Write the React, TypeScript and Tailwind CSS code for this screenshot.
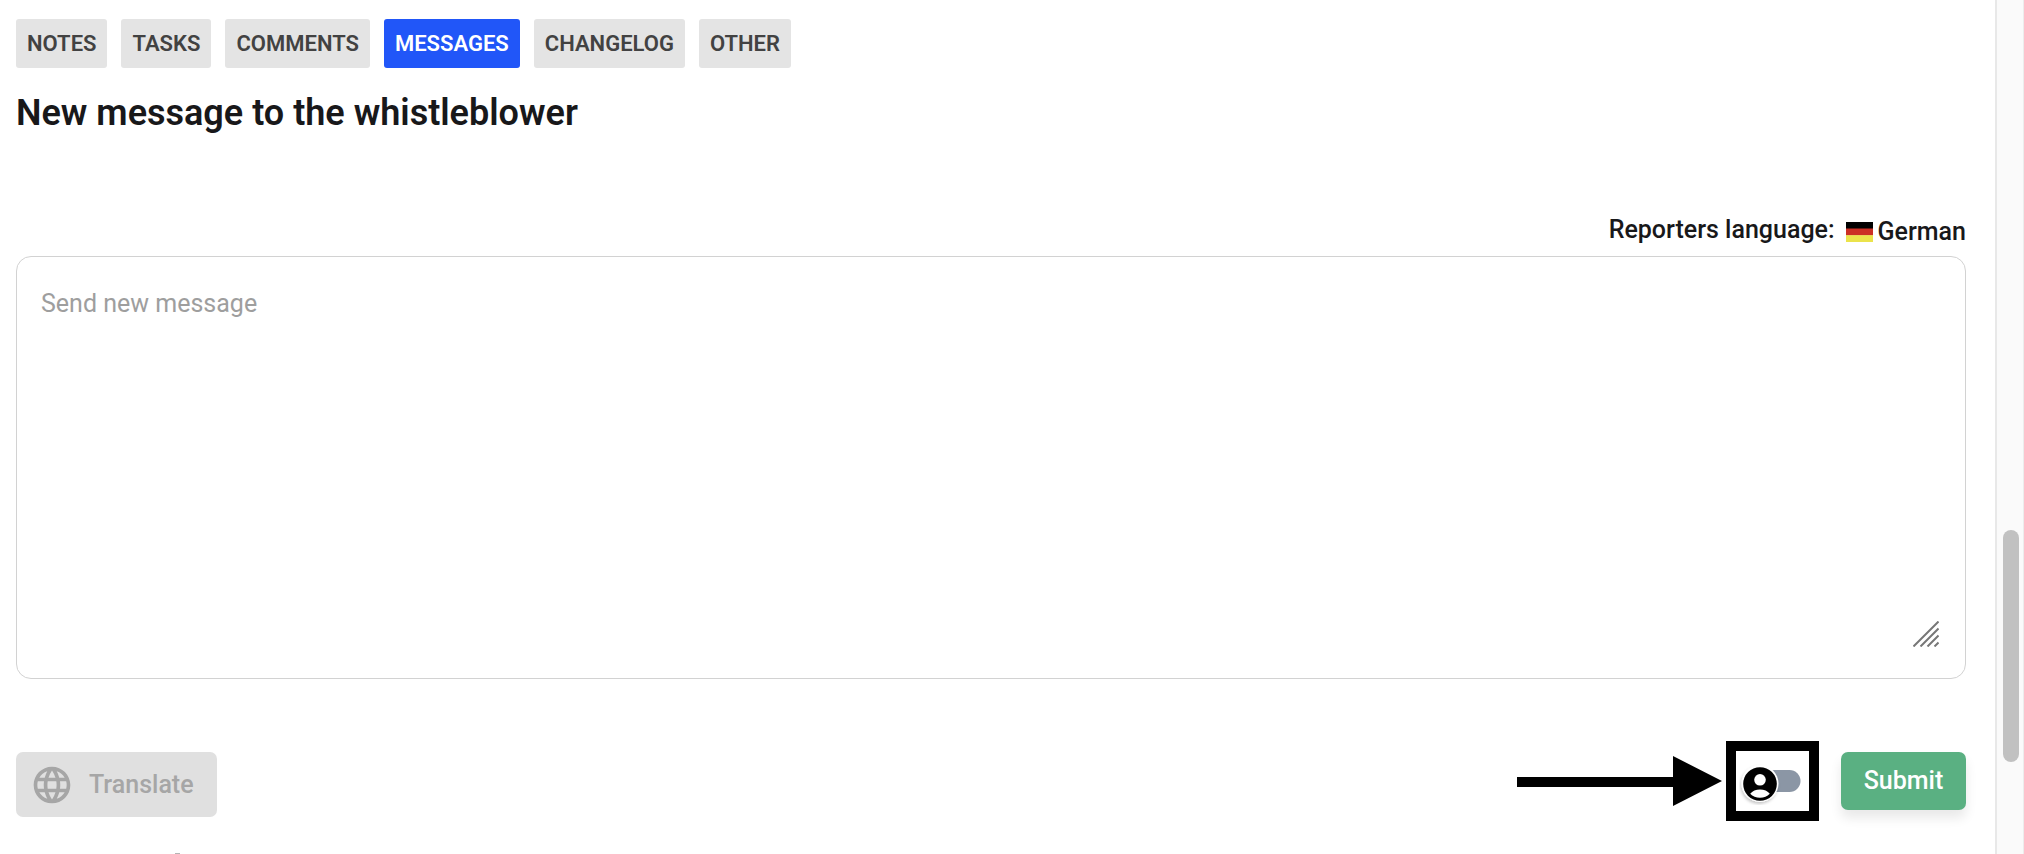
import { useState } from "react";
import { MdLanguage } from "react-icons/md";

const tabs = ["Notes", "Tasks", "Comments", "Messages", "Changelog", "Other"];

function Tabs() {
  const [active, setActive] = useState("Messages");
  return (
    <nav className="flex flex-wrap gap-[14px]">
      {tabs.map((tab) => (
        <button
          key={tab}
          type="button"
          onClick={() => setActive(tab)}
          className={
            tab === active
              ? "h-[49px] rounded-[3px] bg-[#2156f8] px-[11px] text-[22px] font-semibold uppercase text-white"
              : "h-[49px] rounded-[3px] bg-[#e4e4e4] px-[11px] text-[22px] font-semibold uppercase text-[#424242]"
          }
        >
          {tab}
        </button>
      ))}
    </nav>
  );
}

function GermanFlag() {
  return (
    <svg width="27" height="20" viewBox="0 0 27 20" aria-hidden="true">
      <rect width="27" height="7" fill="#000" />
      <rect y="6.5" width="27" height="7" fill="#cc2f25" />
      <rect y="13.2" width="27" height="6.8" fill="#ebe34b" />
    </svg>
  );
}

function ResizeGrip() {
  return (
    <svg
      className="pointer-events-none absolute right-[27px] bottom-[32px]"
      width="26"
      height="26"
      viewBox="0 0 26 26"
      stroke="#777"
      strokeWidth="2"
      aria-hidden="true"
    >
      <path d="M0.5 25.5L25.5 0.5M7.5 25.5L25.5 7.5M14.5 25.5L25.5 14.5M21.5 25.5L25.5 21.5" />
    </svg>
  );
}

function Arrow() {
  return (
    <svg width="205" height="50" viewBox="0 0 205 50" aria-hidden="true">
      <path d="M0 21H156V0L205 25L156 50V31H0Z" fill="#000" />
    </svg>
  );
}

function IdentitySwitch() {
  const [on, setOn] = useState(false);
  return (
    <div className="flex h-20 w-[93px] items-center justify-center border-10 border-black">
      <button type="button" role="switch" aria-checked={on} aria-label="Show identity" onClick={() => setOn(!on)}>
        <svg width="68" height="48" viewBox="0 0 68 48">
          <defs>
            <filter id="knobShadow" x="-30%" y="-30%" width="160%" height="160%">
              <feDropShadow dx="-1" dy="2" stdDeviation="1.6" floodOpacity="0.22" />
            </filter>
          </defs>
          <rect x="16" y="13" width="45.5" height="22" rx="11" fill="#8b96a5" />
          <g transform={on ? "translate(24 0)" : undefined}>
            <circle cx="21" cy="26.5" r="18.5" fill="#fff" filter="url(#knobShadow)" />
            <circle cx="21" cy="27" r="16.8" fill="#000" />
            <circle cx="21" cy="22.8" r="5.8" fill="#fff" />
            <path d="M11.2 36.7C13.3 33.9 16.9 32.4 21 32.4C25.1 32.4 28.7 33.9 30.8 36.7C28.3 39.2 24.9 40.7 21 40.7C17.1 40.7 13.7 39.2 11.2 36.7Z" fill="#fff" />
          </g>
        </svg>
      </button>
    </div>
  );
}

export default function App() {
  return (
    <div className="flex min-h-screen bg-white font-['Roboto',sans-serif] text-[#18181a]">
      <main className="flex min-w-0 flex-1 flex-col pt-[19px] pr-[29px] pl-4">
        <Tabs />
        <h1 className="mt-6 text-[36px] leading-[42px] font-semibold">New message to the whistleblower</h1>
        <div className="mt-[81px] flex items-start justify-end text-[25px] leading-[30px] font-medium">
          <label htmlFor="message">Reporters language:</label>
          <span className="ml-[11px] flex items-center gap-[5px] pt-[2px]">
            <GermanFlag />
            German
          </span>
        </div>
        <div className="relative mt-[9px] flex">
          <textarea
            id="message"
            placeholder="Send new message"
            className="h-[423px] w-full resize-none rounded-[15px] border border-[#d2d2d2] px-6 py-[32px] text-[25px] leading-[30px] outline-none placeholder:text-[#9e9e9e]"
          />
          <ResizeGrip />
        </div>
        <div className="mt-[62px] flex items-start justify-between">
          <button
            type="button"
            disabled
            className="mt-[11px] flex h-[65px] items-center gap-[15px] rounded-[7px] bg-[#e0e0e0] pr-[23px] pl-[14px] text-[25px] font-medium text-[#a6a6a6]"
          >
            <MdLanguage size={44} />
            Translate
          </button>
          <div className="flex items-center">
            <Arrow />
            <div className="ml-1">
              <IdentitySwitch />
            </div>
            <button
              type="submit"
              className="ml-[22px] h-[58px] min-w-[125px] rounded-[7px] bg-[#5ab082] px-[22px] text-[25px] font-medium text-white shadow-[0_8px_12px_rgba(0,0,0,0.09)]"
            >
              Submit
            </button>
          </div>
        </div>
        <div className="mt-8 ml-[159px] h-px w-[5px] bg-[#b5b5b5]" />
      </main>
      <aside
        className="flex w-[29px] shrink-0 flex-col border-r border-l-2 border-r-[#ececec] border-l-[#e8e8e8] bg-[#fafafa] pl-[6px]"
        aria-hidden="true"
      >
        <div className="mt-[530px] h-[232px] w-4 rounded-full bg-[#c1c1c1]" />
      </aside>
    </div>
  );
}
